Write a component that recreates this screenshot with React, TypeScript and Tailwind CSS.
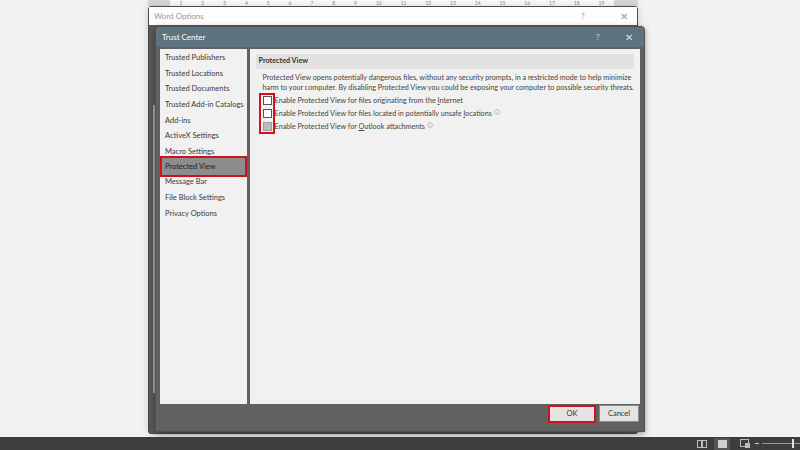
import React from "react";

const navItems = [
  "Trusted Publishers",
  "Trusted Locations",
  "Trusted Documents",
  "Trusted Add-in Catalogs",
  "Add-ins",
  "ActiveX Settings",
  "Macro Settings",
  "Protected View",
  "Message Bar",
  "File Block Settings",
  "Privacy Options",
];

const options = [
  { label: "Enable Protected View for files originating from the ", u: "I", rest: "nternet", info: false, dim: false },
  { label: "Enable Protected View for files located in potentially unsafe ", u: "l", rest: "ocations", info: true, dim: false },
  { label: "Enable Protected View for ", u: "O", rest: "utlook attachments", info: true, dim: true },
];

function InfoIcon() {
  return (
    <svg width="6" height="6" viewBox="0 0 12 12" className="ml-[2px] -mt-[4px] inline-block">
      <circle cx="6" cy="6" r="5" fill="none" stroke="#9a9a9a" strokeWidth="1" />
      <path d="M6 5v4M6 3v1" stroke="#9a9a9a" strokeWidth="1" />
    </svg>
  );
}

function Ruler() {
  const nums = Array.from({ length: 19 }, (_, i) => i + 1);
  return (
    <div className="absolute left-[148px] top-0 w-[490px] h-[6px] overflow-hidden bg-[#fbfbfb] flex">
      <div className="w-[22px] h-full bg-[#d9d9d9]" />
      <div className="flex-1 flex justify-around text-[5px] leading-[6px] text-[#888]">
        {nums.map((n) => (
          <span key={n}>{n}</span>
        ))}
      </div>
      <div className="w-[24px] h-full bg-[#d9d9d9]" />
    </div>
  );
}

function StatusBar() {
  return (
    <div className="absolute left-0 bottom-0 w-[800px] h-[13px] bg-[#3d3d3d] flex items-center justify-end">
      <svg width="10" height="8" viewBox="0 0 10 8" className="mr-[7px]">
        <rect x="0.5" y="0.5" width="4" height="7" fill="none" stroke="#bdbdbd" />
        <rect x="5.5" y="0.5" width="4" height="7" fill="none" stroke="#bdbdbd" />
      </svg>
      <div className="w-[16px] h-[12px] bg-[#555] flex items-center justify-center mr-[10px]">
        <div className="w-[9px] h-[8px] bg-[#cfcfcf]" />
      </div>
      <svg width="10" height="9" viewBox="0 0 10 9" className="mr-[5px]">
        <rect x="0.5" y="0.5" width="8" height="7" fill="none" stroke="#bdbdbd" />
        <path d="M5 4h5v5H5z" fill="#bdbdbd" />
      </svg>
      <div className="flex items-center gap-[3px]">
        <div className="w-[4px] h-px bg-[#cfcfcf]" />
        <div className="relative w-[38px] h-px bg-[#9a9a9a]">
          <div className="absolute right-[6px] -top-[4px] w-[2px] h-[9px] bg-[#e0e0e0]" />
        </div>
      </div>
    </div>
  );
}

export default function App() {
  return (
    <div
      className="relative w-[800px] h-[450px] overflow-hidden bg-[#f2f2f2]"
      style={{ fontFamily: 'Lato, "Liberation Sans", sans-serif' }}
    >
      <Ruler />

      {/* Word Options window (behind) */}
      <div className="absolute left-[148px] top-[6px] w-[490px] h-[428px] flex flex-col bg-[#585858] border border-[#4a4a4a] rounded-[3px] shadow-[0_0_8px_rgba(0,0,0,0.15)]">
        <div className="h-[18px] bg-[#fdfdfd] flex items-center pl-[5px] pr-[8px] text-[8px] text-[#9a9a9a]">
          <span className="flex-1">Word Options</span>
          <span className="w-[38px] text-left">?</span>
          <span className="w-[10px] text-center text-[10px]">✕</span>
        </div>
        <div className="flex-1 flex">
          <div className="w-[4px]" />
          <div className="w-[2px] mt-[80px] mb-[40px] bg-[#a8a8a8]" />
        </div>
      </div>

      {/* Trust Center dialog */}
      <div className="absolute left-[155px] top-[26px] w-[490px] h-[406px] flex flex-col bg-[#616161] rounded-t-[4px] border border-[#4f4f4f] shadow-[0_2px_6px_rgba(0,0,0,0.35)]">
        <div className="h-[20px] shrink-0 bg-[#5d7380] rounded-t-[4px] flex items-center pl-[6px] pr-[10px] text-[8px] text-white">
          <span className="flex-1">Trust Center</span>
          <span className="w-[28px] text-left text-[#c8d2d8]">?</span>
          <span className="w-[10px] text-center text-[10px] text-[#dbe3e7]">✕</span>
        </div>

        <div className="flex-1 flex gap-[3px] pl-[4px] pr-[4px] pt-[2px]">
          {/* left nav */}
          <div className="w-[87px] bg-[#f1f1f1] pt-[1px] text-[7.5px] text-[#3a3a3a]">
            {navItems.map((item) => (
              <div
                key={item}
                className={
                  item === "Protected View"
                    ? "h-[21px] -my-[3px] flex items-center pl-[3px] bg-[#8d8d8d] border-2 border-[#d3111c] text-[#222] whitespace-nowrap"
                    : "h-[15.6px] flex items-center pl-[5px] whitespace-nowrap"
                }
              >
                {item}
              </div>
            ))}
          </div>

          {/* right content */}
          <div className="flex-1 bg-[#f1f1f1] px-[6px] pt-[5px] text-[7.2px] text-[#444]">
            <div className="h-[15px] bg-[#e2e2e2] flex items-center pl-[3px] font-bold text-[#333]">
              Protected View
            </div>
            <div className="pl-[7px] pt-[4px] leading-[10px]">
              <p className="whitespace-nowrap">
                Protected View opens potentially dangerous files, without any security prompts, in a restricted mode to help minimize
              </p>
              <p className="whitespace-nowrap">
                harm to your computer. By disabling Protected View you could be exposing your computer to possible security threats.
              </p>
              <div className="relative mt-[1px]">
                <div className="absolute -left-[4px] -top-[1px] w-[16px] h-[41px] border-2 border-[#d3111c]" />
                {options.map((row) => (
                  <div key={row.rest} className="h-[13px] flex items-center gap-[3px]">
                    <div
                      className={
                        row.dim
                          ? "w-[9px] h-[9px] bg-[#bdbdbd] border border-[#9a9a9a]"
                          : "w-[9px] h-[9px] bg-white border border-[#555]"
                      }
                    />
                    <span className="whitespace-nowrap">
                      {row.label}
                      <span className="underline">{row.u}</span>
                      {row.rest}
                      {row.info && <InfoIcon />}
                    </span>
                  </div>
                ))}
              </div>
            </div>
          </div>
        </div>

        {/* footer */}
        <div className="h-[27px] shrink-0 flex justify-end items-start gap-[3px] pr-[5px] pt-[1px]">
          <div className="w-[48px] h-[18px] bg-[#e4e4e4] border-2 border-[#d3111c] flex items-center justify-center text-[7.5px] text-[#333]">
            OK
          </div>
          <div className="w-[40px] h-[17px] bg-[#e4e4e4] border border-[#8a8a8a] flex items-center justify-center text-[7.5px] text-[#333]">
            Cancel
          </div>
        </div>
      </div>

      <StatusBar />
    </div>
  );
}
